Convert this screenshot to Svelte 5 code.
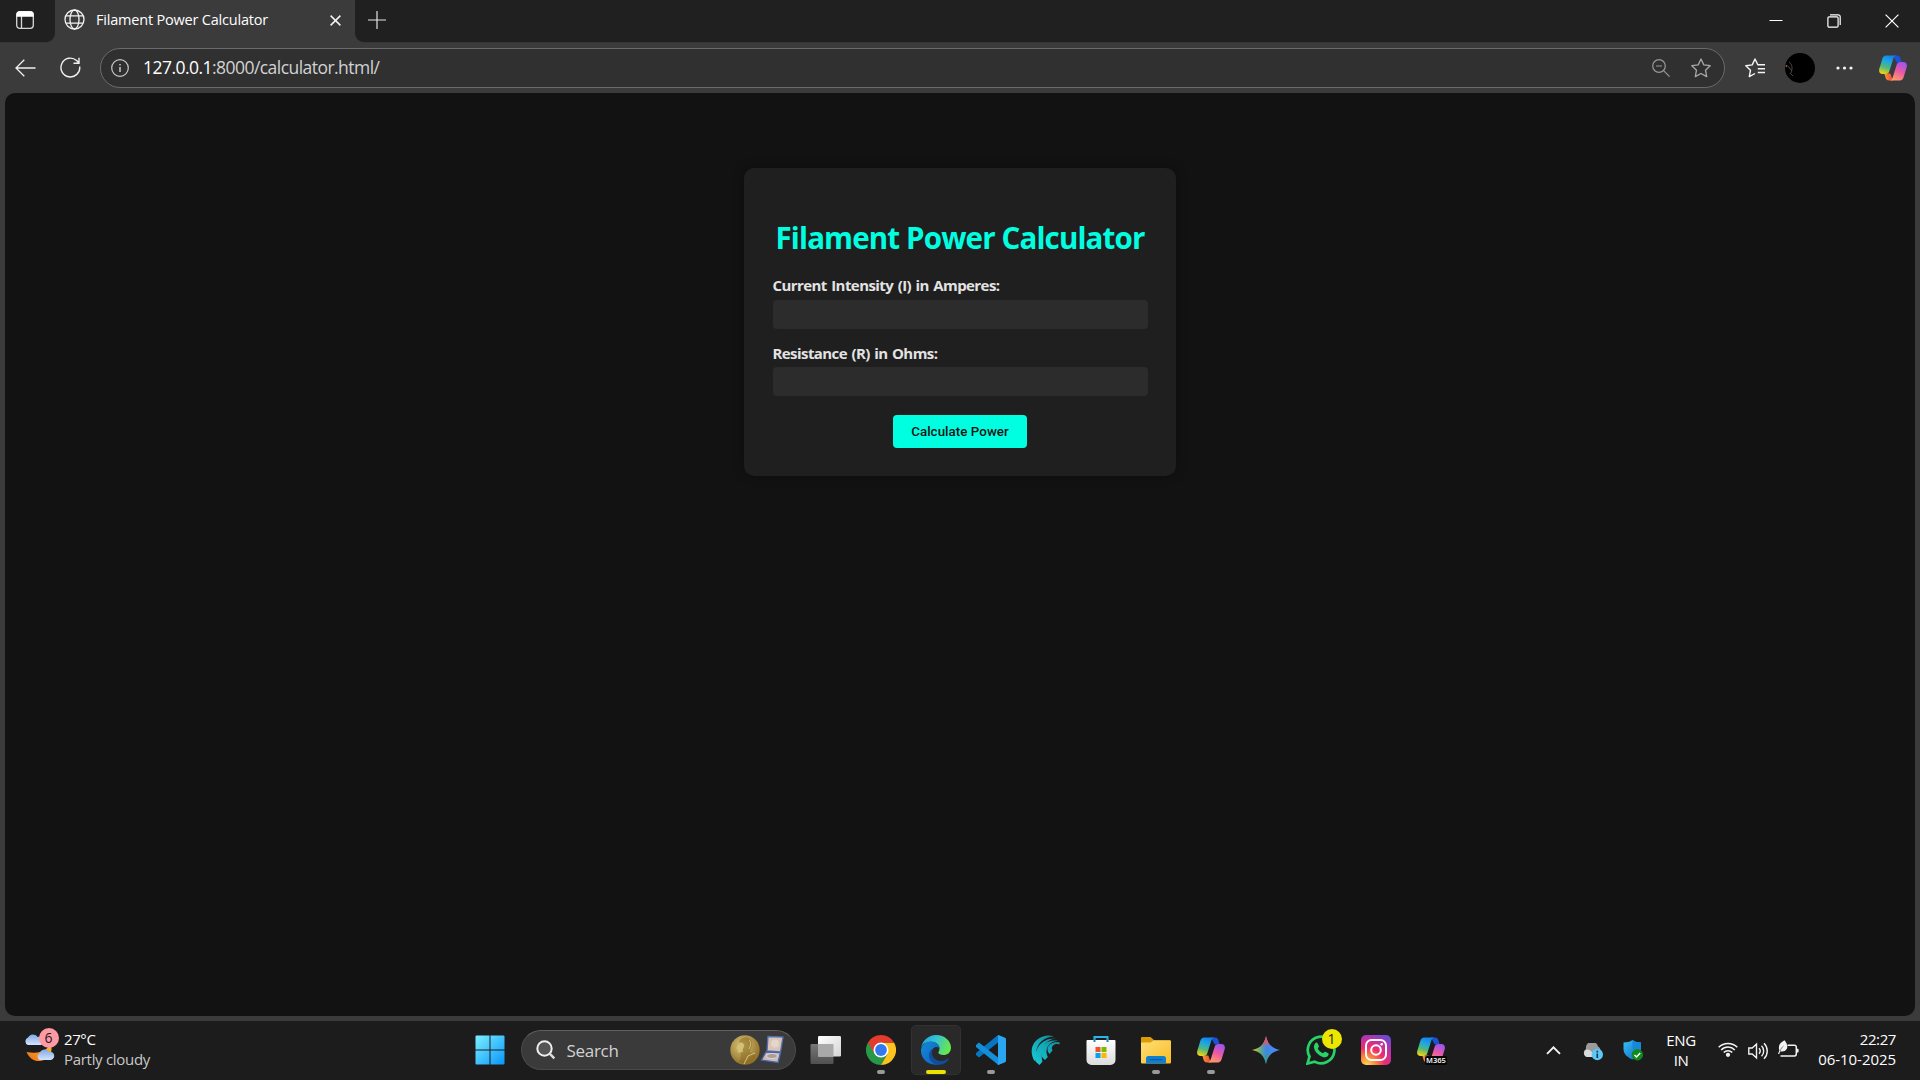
<script>
  let current = $state('');
  let resistance = $state('');
</script>

{#snippet copilot()}
  <svg class="copilot" viewBox="0 0 28 26">
    <path d="M14 .5h4c2 0 2.900 1 3.500 3l1.200 4h-5z" fill="#1c52d8" />
    <path d="M14 25.500h-4c-2 0-2.900-1-3.500-3l-1.200-4h6z" fill="url(#ember)" />
    <path d="M7.200.5h9.800c-1.700.5-2.400 2-3 4l-3.600 11.500c-.7 2.200-1.900 3-3.900 3H3.600C.6 19-.5 16.500.4 13.400L3.300 4C4 1.700 5 .5 7.200.5z" fill="url(#cool)" />
    <path d="M20.800 25.500H11c1.700-.5 2.400-2 3-4L17.600 10c.7-2.200 1.900-3 3.900-3h2.900c3 0 4.100 2.500 3.200 5.600L24.700 22c-.7 2.300-1.700 3.500-3.900 3.500z" fill="url(#warm)" />
  </svg>
{/snippet}

<div class="screen">
  <header class="titlebar">
    <div class="strip-left">
      <svg width="18" height="18" viewBox="0 0 18 18" fill="none" stroke="#d8d8d8" stroke-width="1.300">
        <rect x=".7" y=".7" width="16.600" height="16.600" rx="3" />
        <path d="M5.500 5v12" />
        <path d="M1 5V3.500A2.500 2.500 0 0 1 3.500 1h11A2.500 2.500 0 0 1 17 3.500V5z" fill="#fff" stroke="#fff" />
      </svg>
    </div>
    <div class="tab">
      <svg width="21" height="21" viewBox="0 0 21 21" fill="none" stroke="#f2f2f2" stroke-width="1.300">
        <circle cx="10.500" cy="10.500" r="9.500" />
        <ellipse cx="10.500" cy="10.500" rx="4.500" ry="9.500" />
        <path d="M2 6.800h17M2 14.200h17" />
      </svg>
      <span class="tab-title">Filament Power Calculator</span>
      <svg class="tab-close" width="11" height="11" viewBox="0 0 11 11" stroke="#f2f2f2" stroke-width="1.500"><path d="M.6.6l9.800 9.800M10.400.6L.6 10.400" /></svg>
    </div>
    <div class="strip-right">
      <svg class="plus" width="18" height="18" viewBox="0 0 18 18" stroke="#e4e4e4" stroke-width="1.200"><path d="M9 0v18M0 9h18" /></svg>
      <div class="window-buttons">
        <svg viewBox="0 0 14 14" fill="none" stroke="#fff"><path d="M.5 6.500h13" /></svg>
        <svg viewBox="0 0 14 14" fill="none" stroke="#fff" stroke-width="1.200"><rect x=".9" y="2.900" width="10.200" height="10.200" rx="1.200" /><path d="M3 .8h8.200a2 2 0 0 1 2 2V11" /></svg>
        <svg viewBox="0 0 14 14" stroke="#fff" stroke-width="1.200"><path d="M.6.6l12.800 12.800M13.400.6L.6 13.400" /></svg>
      </div>
    </div>
  </header>

  <nav class="toolbar">
    <div class="tool back"><svg width="21" height="18" viewBox="0 0 21 18" fill="none" stroke="#f0f0f0" stroke-width="1.300"><path d="M20.500 9H1M9.300.7L1 9l8.300 8.300" /></svg></div>
    <div class="tool reload"><svg width="21" height="21" viewBox="0 0 21 21" fill="none" stroke="#f0f0f0" stroke-width="1.400"><path d="M19.700 9.500A9.400 9.400 0 1 1 16.600 3.500L18.500 5.500M19 .8v5.400h-5.500" /></svg></div>
    <div class="address">
      <svg width="18" height="18" viewBox="0 0 18 18" fill="none" stroke="#c9c9c9" stroke-width="1.200"><circle cx="9" cy="9" r="8.300" /><path d="M9 8v5M9 5v1.500" stroke-width="1.500" /></svg>
      <span class="url"><b>127.0.0.1</b>:8000/calculator.html/</span>
      <svg class="zoom" width="18" height="18" viewBox="0 0 18 18" fill="none" stroke="#989898" stroke-width="1.200"><circle cx="7" cy="7" r="6.300" /><path d="M11.600 11.600l6 6M4 7h6" /></svg>
      <svg class="star" width="20" height="20" viewBox="0 0 20 20" fill="none" stroke="#a8a8a8" stroke-width="1.300" stroke-linejoin="round"><path d="M10 1l2.800 5.900 6.400.8-4.700 4.500 1.200 6.400L10 15.500l-5.700 3.100 1.200-6.400L.8 7.700l6.400-.8z" /></svg>
    </div>
    <div class="tool favorites"><svg width="21" height="20" viewBox="0 0 21 20" fill="none" stroke="#f5f5f5" stroke-width="1.400" stroke-linejoin="round"><path d="M20 6.800h-7.200L10 1 7.200 6.900.8 7.700l4.700 4.500-1.200 6.400 5.700-3.100M12.800 10.700H20M12.800 14.500H20" /></svg></div>
    <div class="tool profile">
      <svg width="30" height="30" viewBox="0 0 30 30"><circle cx="15" cy="15" r="15" /><path d="M4 9c3 2 4 6 2 11M3 13l4 5M5 20l3 3" fill="none" stroke="#555" stroke-width=".8" /><circle cx="1.500" cy="13" r=".9" fill="#a56a43" /></svg>
    </div>
    <div class="tool more"><svg width="17" height="4" viewBox="0 0 17 4" fill="#f5f5f5"><circle cx="2" cy="2" r="1.600" /><circle cx="8.500" cy="2" r="1.600" /><circle cx="15" cy="2" r="1.600" /></svg></div>
    <div class="tool assistant">{@render copilot()}</div>
  </nav>

  <main class="page">
    <form class="card" onsubmit={(e) => e.preventDefault()}>
      <h1>Filament Power Calculator</h1>
      <label for="current">Current Intensity (I) in Amperes:</label>
      <input id="current" bind:value={current} />
      <label class="second" for="resistance">Resistance (R) in Ohms:</label>
      <input id="resistance" bind:value={resistance} />
      <button>Calculate Power</button>
    </form>
  </main>

  <footer class="taskbar">
    <div class="weather">
      <div class="weather-icon">
        <svg width="32" height="30" viewBox="0 0 32 30">
          <path d="M26 6c1 9-7 16-23.500 13C5 25 10 28.500 16 28c7-.5 12-6 11.500-13z" fill="url(#moon)" />
          <path d="M4 12a4 4 0 0 1 0-7.500A5.500 5.500 0 0 1 13.500 4 4.300 4.300 0 0 1 17 12z" fill="url(#cloud)" />
          <path d="M16 27a3.700 3.700 0 0 1 0-7 5 5 0 0 1 9-1.200A4.200 4.200 0 0 1 27 27z" fill="url(#cloud)" />
        </svg>
        <span class="weather-badge">6</span>
      </div>
      <div class="weather-text"><span class="temp">27°C</span><span class="sky">Partly cloudy</span></div>
    </div>

    <div class="apps">
      <div class="app">
        <svg class="start" width="30" height="30" viewBox="0 0 30 30">
          <defs>
            <linearGradient id="win" gradientUnits="userSpaceOnUse" x1="0" y1="0" x2="30" y2="30"><stop stop-color="#7df1ff" /><stop offset="1" stop-color="#0794fb" /></linearGradient>
            <linearGradient id="cool" x1=".6" y1="0" x2=".3" y2="1"><stop stop-color="#1482ef" /><stop offset=".35" stop-color="#20a9dc" /><stop offset=".65" stop-color="#55b878" /><stop offset="1" stop-color="#f0d313" /></linearGradient>
            <linearGradient id="warm" x1=".7" y1="0" x2=".3" y2="1"><stop stop-color="#9b55f0" /><stop offset=".5" stop-color="#ec5aa4" /><stop offset="1" stop-color="#ff9d63" /></linearGradient>
            <linearGradient id="ember"><stop stop-color="#f79a2c" /><stop offset="1" stop-color="#ed4545" /></linearGradient>
            <linearGradient id="moon" x1="1" y1="0" x2="0" y2="1"><stop stop-color="#f9c936" /><stop offset="1" stop-color="#ef6c12" /></linearGradient>
            <linearGradient id="cloud" x1="0" y1="0" x2="0" y2="1"><stop stop-color="#7fa8e8" /><stop offset="1" stop-color="#d6e4fb" /></linearGradient>
            <radialGradient id="medal" cx=".4" cy=".35" r=".7"><stop stop-color="#dcc67c" /><stop offset="1" stop-color="#8a6a20" /></radialGradient>
            <linearGradient id="edge-top" x1="0" y1="0" x2="1" y2=".3"><stop stop-color="#1c9fe0" /><stop offset=".5" stop-color="#35c1d8" /><stop offset="1" stop-color="#65e553" /></linearGradient>
            <linearGradient id="edge-low" x1="0" y1="0" x2="1" y2="1"><stop stop-color="#1688d8" /><stop offset="1" stop-color="#0b62bd" /></linearGradient>
            <linearGradient id="wave" gradientUnits="userSpaceOnUse" x1="5" y1="28" x2="28" y2="4"><stop stop-color="#19c6d3" /><stop offset=".6" stop-color="#12a5b4" /><stop offset="1" stop-color="#178591" /></linearGradient>
            <linearGradient id="bag" x1="0" y1="0" x2="0" y2="1"><stop stop-color="#fff" /><stop offset="1" stop-color="#dcdcdc" /></linearGradient>
            <linearGradient id="folder" x1="0" y1="0" x2="1" y2="1"><stop stop-color="#ffdf78" /><stop offset="1" stop-color="#f9bc25" /></linearGradient>
            <linearGradient id="gem" x1="0" y1="0" x2="1" y2="0"><stop stop-color="#f4c22c" /><stop offset=".25" stop-color="#76b36b" /><stop offset=".5" stop-color="#3d86ea" /><stop offset="1" stop-color="#4b8efb" /></linearGradient>
            <linearGradient id="gem-top" x1="0" y1="0" x2="0" y2="1"><stop stop-color="#f0484a" /><stop offset=".35" stop-color="#e85560" /><stop offset=".8" stop-color="#e85560" stop-opacity="0" /></linearGradient>
            <linearGradient id="gem-low" x1="0" y1="0" x2="0" y2="1"><stop offset="0" stop-color="#35a852" stop-opacity="0" /><stop offset="1" stop-color="#35a852" /></linearGradient>
            <radialGradient id="insta" cx=".2" cy="1" r="1.150"><stop stop-color="#ffd65c" /><stop offset=".25" stop-color="#fb8a3c" /><stop offset=".5" stop-color="#ee2f68" /><stop offset=".75" stop-color="#c32fa5" /><stop offset="1" stop-color="#6b4ad2" /></radialGradient>
            <linearGradient id="shield" x1="0" y1="0" x2="1" y2="1"><stop stop-color="#39c0f5" /><stop offset="1" stop-color="#0b65c0" /></linearGradient>
            <linearGradient id="pane-front" x1="0" y1="0" x2="1" y2="1"><stop stop-color="#fff" /><stop offset="1" stop-color="#d4d4d4" /></linearGradient>
            <linearGradient id="pane-back" x1="0" y1="0" x2="0" y2="1"><stop stop-color="#777" /><stop offset="1" stop-color="#505050" /></linearGradient>
          </defs>
          <path fill="url(#win)" d="M1.500.5H14.500V14.500H.5V1.500a1 1 0 0 1 1-1zM15.500.5h13a1 1 0 0 1 1 1v13h-14zM.5 15.500h14v14h-13a1 1 0 0 1-1-1zM15.500 15.500h14v13a1 1 0 0 1-1 1h-13z" />
        </svg>
      </div>

      <div class="search">
        <svg width="20" height="20" viewBox="0 0 20 20" fill="#555" stroke="#eee" stroke-width="2"><circle cx="8.500" cy="8.500" r="7.200" /><path d="M13.700 13.700l4.600 4.600" stroke-width="2.400" stroke="#ddd" /></svg>
        <span>Search</span>
        <svg class="prize" width="54" height="30" viewBox="0 0 54 30">
          <circle cx="15" cy="15" r="14.700" fill="url(#medal)" />
          <path d="M9 8c0-4 5-6.500 9-5 4 1.500 5 6 3 10l-1.500 4 6 3c-1 4-5 7.500-10 8.500l-6-1 1.500-7-1-3.500c-2 .3-3-.5-2.500-2.500L6 13z" fill="#86661f" opacity=".5" />
          <path d="M9 8c2-1 5 0 5 2.500S12 14 13 17l-3 .5c-2 .3-3-.5-2.500-2.500L6 13z" fill="#e0cc86" opacity=".8" />
          <path d="M25 18l-7 3-4 8M19 5c2.500 2 2 5 0 9" fill="none" stroke="#dfcb83" stroke-width=".9" />
          <path d="M38 1.500l15 .5-2.500 15-13.500-1z" fill="#d9c4ba" stroke="#5270ae" stroke-width="1.300" />
          <path d="M36 17l14.500.5-2.500 10L31.500 25z" fill="#cbbcb8" stroke="#4868ab" stroke-width="1.300" />
          <ellipse cx="42" cy="21" rx="5.500" ry="2.500" fill="#ad9d99" stroke="#f0e5df" stroke-width=".7" />
          <circle cx="45" cy="8.500" r="4" fill="#e6d5c9" />
        </svg>
      </div>

      <div class="app">
        <svg class="task-view" width="32" height="30" viewBox="0 0 32 30"><rect x="1.500" y="9" width="23" height="20" rx="1.200" fill="url(#pane-back)" /><rect x="9" y="1" width="23" height="20.500" rx="1.200" fill="url(#pane-front)" /><path d="M9 9h15.500v12.500H9z" fill="#a9a9a9" /></svg>
      </div>
      <div class="app running">
        <svg width="30" height="30" viewBox="0 0 30 30">
          <path d="M15 15L2 7.500A15 15 0 0 0 15 30l6.500-11.300z" fill="#279847" />
          <path d="M28 7.500H15V15l6.500 3.800L15 30A15 15 0 0 0 28 7.500z" fill="#fcc31e" /><path d="M2 7.500A15 15 0 0 1 15 0a15 15 0 0 1 13 7.500H15l-6.500 11.200z" fill="#e33b2e" />
          <circle cx="15" cy="15" r="7.500" fill="#fff" /><circle cx="15" cy="15" r="5.900" fill="#3478ef" />
        </svg>
      </div>
      <div class="app active">
        <svg width="30" height="30" viewBox="0 0 30 30">
          <path d="M.2 13C1.200 5.500 7.500 0 15 0c9 0 15 6.200 15 12.500 0 5-3.500 7.500-7.500 7.500-3 0-5.200-1-5.200-2.200 0-1 1.200-1.500 1.200-4.300C18.500 9.500 14.500 6.800 10 6.800 5 6.800 1.500 9 .2 13z" fill="url(#edge-top)" />
          <path d="M0 15C.5 10 5 6.800 10 6.800c5 0 8.500 3 8.500 6.200-1-1-2.500-1.300-4-1-4 1.200-5.500 6.500-3.500 11.500 1.500 3.500 5 6 7.500 6C8.500 31.500-.5 24.500 0 15z" fill="url(#edge-low)" />
          <path d="M12.300 13.500C8.500 19 12.500 26 20 26c3.500 0 5.300-1.200 7-2.200.7-.3 1 .1.700.7C25 28.500 21 30 17.500 29.800 11 29 7.500 24.500 8 19.500c.3-3 2-5 4.300-6z" fill="#124c9d" />
        </svg>
      </div>
      <div class="app running">
        <svg width="30" height="30" viewBox="0 0 30 30"><path d="M22 0l8 3.500v23L22 30V7.500L3 22.500 0 20v-2z" fill="#0875c2" /><path d="M0 10l3-2.500L22 22.500V30l-1.500-1.500L0 12z" fill="#148ed9" /><path d="M22 0l6.500 2.600A2 2 0 0 1 30 4.500v21a2 2 0 0 1-1.500 1.900L22 30z" fill="#2aa5f2" /></svg>
      </div>
      <div class="app">
        <svg width="30" height="30" viewBox="0 0 30 30" fill="url(#wave)">
          <path d="M3.500 26C-1.500 18 .5 8.500 7 4c5-3.800 11-4.500 16-2.500C12 1.500 2.500 11 6 23z" />
          <path d="M8.500 30L4.500 26.500C3 14 10 2.500 25.500 3.500 15 4 8.500 14 11.500 26.500z" />
          <path d="M14 25l-3-3C7.500 12 15.500 3.500 28 5.800 18.500 6 13 13 16.800 22z" />
          <path d="M18.500 19C14 14 17 7 27 7c2 0 2.500 1.500 1 2.500-3-1.500-9 1-6.500 6z" />
        </svg>
      </div>
      <div class="app">
        <svg width="30" height="30" viewBox="0 0 30 30"><path d="M8.500 7V2h13v5" fill="none" stroke="#28b5ee" stroke-width="2" /><path d="M1.500 5h27a1 1 0 0 1 1 1v19a5 5 0 0 1-5 5H5.500a5 5 0 0 1-5-5V6a1 1 0 0 1 1-1z" fill="url(#bag)" /><path d="M8.500 4v3M21.500 4v3" stroke="#1687bd" stroke-width="2" /><path d="M9.500 12h5v5h-5z" fill="#f05126" /><path d="M15.500 12h5v5h-5z" fill="#7db900" /><path d="M9.500 18h5v5h-5z" fill="#05a3ec" /><path d="M15.500 18h5v5h-5z" fill="#fdb700" /></svg>
      </div>
      <div class="app running">
        <svg width="30" height="30" viewBox="0 0 30 30"><path d="M0 3a1 1 0 0 1 1-1h8.500l4 3.500H29V12H0z" fill="#de9b08" /><path d="M0 7.500h9.500L13 5.200h16a1 1 0 0 1 1 1V27.500a1 1 0 0 1-1 1H1a1 1 0 0 1-1-1z" fill="url(#folder)" /><path d="M5 28.500v-5A2.500 2.500 0 0 1 7.500 21h15a2.500 2.500 0 0 1 2.500 2.500v5z" fill="#107fcf" /><path d="M8.500 24.700h13" stroke="#0b5797" /></svg>
      </div>
      <div class="app running">{@render copilot()}</div>
      <div class="app">
        <svg width="28" height="28" viewBox="0 0 28 28"><path d="M14 0c1.500 8 6 12.500 14 14-8 1.500-12.500 6-14 14-1.500-8-6-12.500-14-14 8-1.500 12.500-6 14-14z" fill="url(#gem)" /><path d="M14 0c1.500 8 6 12.500 14 14H0c8-1.500 12.500-6 14-14z" fill="url(#gem-top)" /><path d="M14 28c1.500-8 6-12.500 14-14H0c8 1.500 12.500 6 14 14z" fill="url(#gem-low)" opacity=".7" /></svg>
      </div>
      <div class="app">
        <svg width="30" height="30" viewBox="0 0 30 30"><path d="M1.500 28.500l2-7A13.300 13.300 0 1 1 8.600 26.600z" fill="none" stroke="#27d267" stroke-width="2.700" /><path d="M9.200 8.300c.8-1.200 1.900-1 2.400-.1l1.300 2.900c.3.800-1 1.900-1.100 2.500.9 2 2.700 3.800 5 4.700.7-.2 1.700-1.900 2.500-1.500l3 1.500c.7.400.3 2.200-.7 3-2 1.700-5.200.9-8.300-1.100-4.600-3.200-7-8.300-4.100-11.900z" fill="#27d267" /></svg>
        <span class="app-badge">1</span>
      </div>
      <div class="app">
        <svg width="30" height="30" viewBox="0 0 30 30"><rect width="30" height="30" rx="5" fill="url(#insta)" /><g fill="none" stroke="#fff" stroke-width="2"><rect x="5" y="5" width="20" height="20" rx="5.500" /><circle cx="15" cy="15" r="4.800" /></g><circle cx="20.700" cy="9.300" r="1.300" fill="#fff" /></svg>
      </div>
      <div class="app">{@render copilot()}<span class="m365">M365</span></div>
    </div>

    <div class="tray">
      <div class="tray-cell"><svg width="15" height="9" viewBox="0 0 15 9" fill="none" stroke="#f2f2f2" stroke-width="1.900"><path d="M1 7.800L7.500 1.300 14 7.800" /></svg></div>
      <div class="tray-cell cloud"><svg width="20" height="18" viewBox="0 0 20 18"><path d="M4 13.500A4 4 0 0 1 3 6a6 6 0 0 1 12-2.500c2 1 3 3 2.500 5.500z" fill="#9b9b9b" /><path d="M3.500 14a3.900 3.900 0 0 1 1-7.500c3 0 5 3 7.500 7.500z" fill="#dadada" /><circle cx="14.300" cy="11.500" r="5.700" fill="#5bc8f8" /><path d="M14.300 10.500v4.500M14.300 7.700v1.700" stroke="#153746" stroke-width="1.600" /></svg></div>
      <div class="tray-cell"><svg width="20" height="21" viewBox="0 0 20 21"><path d="M9.500 0c2.500 1.800 5.500 2.500 8.500 2.500V9c0 5-4 8.500-8.500 10.500C4.500 17.500.5 14 .5 9V2.500C3.500 2.500 7 1.800 9.500 0z" fill="url(#shield)" /><path d="M9.500 0v9.500H18V2.500C15 2.500 12 1.800 9.500 0z" fill="#1689da" /><circle cx="14.300" cy="14.800" r="5.700" fill="#12891d" /><path d="M11.500 15l2 2 3.700-4" fill="none" stroke="#fff" stroke-width="1.500" /></svg></div>
      <div class="lang"><span>ENG</span><span>IN</span></div>
      <div class="quick wifi"><svg width="20" height="16" viewBox="0 0 20 16" fill="none" stroke="#f2f2f2" stroke-width="1.500"><path d="M.7 6.300a13 13 0 0 1 18.600 0M3.200 8.900a9.500 9.500 0 0 1 13.600 0M5.700 11.500a6 6 0 0 1 8.600 0" /><circle cx="10" cy="13.800" r="1.400" fill="#f2f2f2" /></svg></div>
      <div class="quick"><svg width="20" height="18" viewBox="0 0 20 18" fill="none" stroke="#f2f2f2" stroke-width="1.400"><path d="M.8 6h3.400L8.500 2v14L4.200 12H.8zM11 6.300a4 4 0 0 1 0 5.400M13.500 3.700a7.500 7.500 0 0 1 0 10.600M16 1.200a11 11 0 0 1 0 15.600" /></svg></div>
      <div class="quick battery"><svg width="21" height="18" viewBox="0 0 21 18"><path d="M9.500 5.300h7a1.800 1.800 0 0 1 1.800 1.800v7a1.800 1.800 0 0 1-1.800 1.800H2.500" fill="none" stroke="#f2f2f2" stroke-width="1.500" /><path d="M18.500 8.700h1.300a.8.800 0 0 1 .8.800v2.300a.8.800 0 0 1-.8.800h-1.300z" fill="#f2f2f2" /><path d="M6.500.2C8.700 3 10.200 6 8.700 9 7.500 11.300 4.500 12 2.300 11.200L1.200 14H0l1.300-3.500C-.2 5 2.500 2.500 6.500.2z" fill="#f2f2f2" /><path d="M2 11C3 8.500 4.300 7 5.500 6" stroke="#555" stroke-width=".7" fill="none" /></svg></div>
      <div class="clock"><span class="time">22:27</span><span class="date">06-10-2025</span></div>
    </div>
  </footer>
</div>

<style>
  :global(body) { margin: 0; background: #121212; }
  .screen { width: 1920px; height: 1080px; display: flex; flex-direction: column; overflow: hidden; background: #3b3b3b; font-family: "Open Sans", "Noto Sans", sans-serif; color: #fff; }
  svg { display: block; flex: none; }
  span { white-space: nowrap; }

  .titlebar { height: 42px; display: flex; flex: none; background: #3b3b3b; }
  .strip-left { width: 55px; box-sizing: border-box; padding: 11px 0 0 16px; background: #202020; border-bottom-right-radius: 9px; box-shadow: 0 1px #353535; }
  .tab { width: 300px; box-sizing: border-box; display: flex; align-items: center; padding: 0 14px 3px 8.500px; background: #3b3b3b; }
  .tab-title { margin-left: 11.500px; font-size: 14.500px; letter-spacing: -.2px; }
  .tab-close { margin-left: auto; margin-top: 2px; }
  .strip-right { flex: 1; display: flex; justify-content: space-between; background: #202020; border-bottom-left-radius: 9px; box-shadow: 0 1px #353535; }
  .plus { margin: 10.500px 0 0 13px; }
  .window-buttons { display: flex; gap: 44px; padding: 14px 21.500px 0 0; }
  .window-buttons svg { width: 14px; height: 14px; }

  .toolbar { height: 51px; flex: none; display: flex; align-items: center; }
  .tool { display: flex; justify-content: center; }
  .back { width: 50px; }
  .reload { width: 40px; }
  .address { width: 1625px; height: 40px; box-sizing: border-box; margin-left: 10px; border: 1px solid #6b6b6b; border-radius: 20px; background: #303030; display: flex; align-items: center; padding: 0 13px 0 10px; }
  .url { margin-left: 14px; padding-bottom: 2px; font-size: 17.500px; letter-spacing: -.54px; color: #d2d2d2; }
  .url b { font-weight: 400; color: #fff; }
  .zoom { margin-left: auto; }
  .star { margin-left: 21px; }
  .favorites { width: 60px; }
  .profile { width: 30px; }
  .more { width: 59px; }
  .assistant { width: 38px; }
  .copilot { width: 28px; height: 26px; }

  .page { height: 923px; flex: none; margin: 0 5px; border-radius: 10px; background: #121212; display: flex; justify-content: center; align-items: flex-start; }
  .card { width: 432px; height: 308px; box-sizing: border-box; margin-top: 75px; padding: 49px 28.500px 28px; border-radius: 10px; background: #1f1f1f; box-shadow: 0 0 12px rgba(0, 0, 0, .3); display: flex; flex-direction: column; }
  h1 { margin: 0 -10px 16px; height: 41px; line-height: 41px; text-align: center; font-size: 29.500px; letter-spacing: -.85px; font-weight: 700; color: #00ffe0; white-space: nowrap; }
  label { height: 23px; line-height: 23px; margin-bottom: 3px; font-size: 15px; letter-spacing: -.57px; word-spacing: 1.100px; font-weight: 700; color: #e3e3e3; }
  label.second { margin: 1px 0 2px; }
  input { height: 29px; box-sizing: border-box; width: 375px; margin: 0 0 12px; padding: 0 8px; border: 0; border-radius: 4px; background: #2c2c2c; color: #fff; outline: none; }
  button { align-self: center; width: 134px; height: 33px; margin-top: 7px; padding: 0; border: 0; border-radius: 4px; background: #00ffe0; color: #121212; font: 500 13.330px Roboto, "Liberation Sans", sans-serif; letter-spacing: .05px; }

  .taskbar { height: 59px; margin-top: 5px; flex: none; display: flex; background: #1c1c1c; }
  .weather { width: 461.500px; box-sizing: border-box; padding: 7px 0 0 24px; display: flex; }
  .weather-icon { position: relative; width: 32px; height: 36px; padding-top: 5px; }
  .weather-badge { position: absolute; left: 14.500px; top: 0; width: 20px; height: 20px; border-radius: 50%; background: #ff99a4; color: #1c1c1c; font-size: 14px; line-height: 20px; text-align: center; }
  .weather-text { margin: 1px 0 0 8px; display: flex; flex-direction: column; font-size: 15px; line-height: 20px; }
  .temp { letter-spacing: -.4px; }
  .sky { letter-spacing: -.3px; color: #c8c8c8; }
  .apps { display: flex; align-items: center; height: 58px; }
  .app { position: relative; width: 55px; height: 50px; display: flex; align-items: center; justify-content: center; }
  .app.running::after, .app.active::after { content: ""; position: absolute; bottom: 1px; width: 8px; height: 4px; border-radius: 2px; background: #999; }
  .app.active::after { width: 20px; background: #ece200; }
  .app.active { width: 50px; box-sizing: border-box; margin: 0 2.500px; background: #292929; border: 1px solid #323232; border-radius: 5px; }
  .app.active::after { bottom: 0; }
  .start { margin-left: 1px; }
  .task-view { margin-right: 2px; }
  .search { width: 275px; height: 40px; box-sizing: border-box; margin: 0 2.500px 0 4px; padding: 0 11px 0 14px; border: 1px solid #4a4a4a; border-top-color: #606060; border-radius: 20px; background: #3a3a3a; display: flex; align-items: center; }
  .search span { margin-left: 11px; font-size: 17px; letter-spacing: -.3px; color: #d2d2d2; }
  .prize { margin-left: auto; }
  .app-badge { position: absolute; left: 28.500px; top: 4px; width: 20px; height: 20px; border-radius: 50%; background: #ece600; color: #222; font-size: 14px; line-height: 20px; text-align: center; }
  .m365 { position: absolute; left: 22px; top: 31px; padding: 0 1px; border-radius: 2px; background: #060606; font-size: 7.500px; line-height: 9px; font-weight: 600; letter-spacing: 0; }

  .tray { margin-left: auto; height: 59px; display: flex; align-items: center; padding-right: 24px; }
  .tray-cell { width: 40px; display: flex; justify-content: center; }
  .cloud { padding-top: 3px; }
  .lang { width: 56px; margin-right: 4px; padding-bottom: 2px; display: flex; flex-direction: column; align-items: center; font-size: 15px; line-height: 20px; letter-spacing: -.4px; }
  .quick { width: 30px; display: flex; justify-content: center; }
  .wifi { padding-bottom: 3px; }
  .battery { padding-bottom: 4px; }
  .clock { width: 93px; display: flex; flex-direction: column; align-items: flex-end; font-size: 15px; line-height: 20px; padding-bottom: 4px; }
  .time { letter-spacing: -.4px; }
  .date { letter-spacing: -.05px; }
</style>
